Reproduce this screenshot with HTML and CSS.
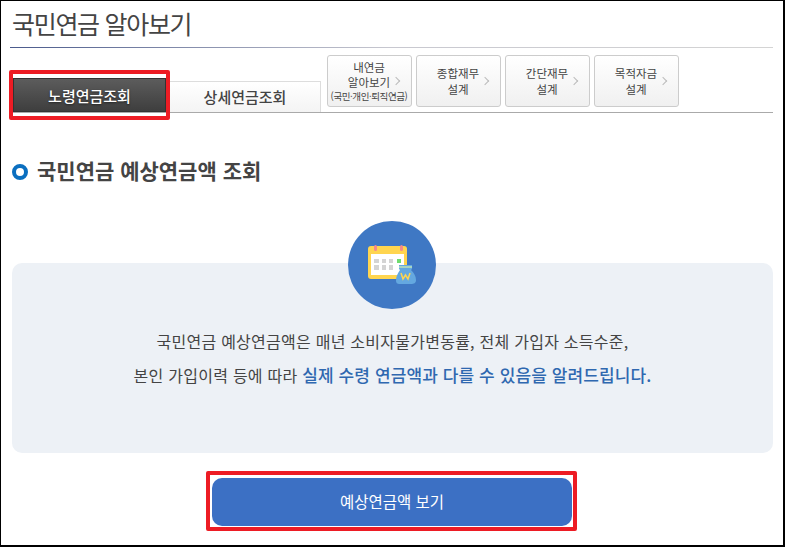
FILE: index.html
```html
<!DOCTYPE html>
<html lang="ko">
<head>
    <meta charset="UTF-8">
    <meta name="viewport" content="width=device-width, initial-scale=1.0">
    <title>국민연금 알아보기</title>
    <link rel="stylesheet" href="styles.css">
</head>
<body>

    <div class="page">
        <h1 class="page-title">국민연금 알아보기</h1>

        <div class="tabs">
            <a class="tab tab-active">노령연금조회</a>
            <a class="tab">상세연금조회</a>
            <div class="links">
                <a class="link link-small">
                    <span class="link-text">내연금<br>알아보기<small>(국민·개인·퇴직연금)</small></span>
                    <span class="chev"></span>
                </a>
                <a class="link"><span class="link-text">종합재무<br>설계</span><span class="chev"></span></a>
                <a class="link"><span class="link-text">간단재무<br>설계</span><span class="chev"></span></a>
                <a class="link"><span class="link-text">목적자금<br>설계</span><span class="chev"></span></a>
            </div>
        </div>

        <h2 class="section-title"><span class="bullet"></span>국민연금 예상연금액 조회</h2>

        <div class="notice">
            <div class="notice-icon">
                <svg width="50" height="42" viewBox="0 0 50 42">
                    <rect x="1" y="2" width="39" height="33" rx="3" fill="#ffd54f"/>
                    <rect x="4" y="10" width="33" height="21" fill="#fff"/>
                    <rect x="7" y="1" width="3" height="6" rx="1.5" fill="#f48a8a"/>
                    <rect x="33" y="1" width="3" height="6" rx="1.5" fill="#f48a8a"/>
                    <g fill="#d4d4d4">
                        <rect x="7" y="15" width="5" height="4"/>
                        <rect x="15" y="15" width="4" height="4"/>
                        <rect x="22" y="15" width="4" height="4"/>
                        <rect x="7" y="21" width="5" height="5"/>
                        <rect x="15" y="21" width="4" height="5"/>
                        <rect x="22" y="21" width="4" height="5"/>
                    </g>
                    <rect x="30" y="15" width="4" height="4" fill="#6fdc6f"/>
                    <path d="M32 21h13v4l-1 1c3 3 5 6 5 10 0 3-2 4-5 4H33c-3 0-4-1-4-4 0-4 2-7 4-10l-1-1z" fill="#64a8e0"/>
                    <rect x="32" y="22" width="13" height="2" fill="#a5d4c4"/>
                    <path d="M34 29l2 6 2.500-4 2.500 4 2-6" fill="none" stroke="#ffd54f" stroke-width="1.500"/>
                </svg>
            </div>
            <p>국민연금 예상연금액은 매년 소비자물가변동률, 전체 가입자 소득수준,</p>
            <p>본인 가입이력 등에 따라 <strong>실제 수령 연금액과 다를 수 있음을 알려드립니다.</strong></p>
        </div>

        <div class="action">
            <button type="button">예상연금액 보기</button>
        </div>

        <span class="mark mark-tab"></span>
        <span class="mark mark-button"></span>
    </div>

</body>
</html>
```

FILE: styles.css
```css
* {
    box-sizing: border-box;
}

html, body {
    margin: 0;
    height: 547px;
    overflow: hidden;
}

body {
    font-family: "Noto Sans CJK KR", "Noto Sans", sans-serif;
    background-color: #fff;
    color: #333;
}

.page {
    position: relative;
    width: 785px;
    height: 547px;
    padding: 0 10px 0 9px;
    background-color: #fff;
    border-style: solid;
    border-color: #000;
    border-width: 1px 2px 2px 1px;
}

.page-title {
    height: 47px;
    margin: 0;
    padding: 3px 0 0 2px;
    font-size: 25px;
    line-height: 38px;
    font-weight: 400;
    letter-spacing: -1.3px;
    color: #444;
    background: linear-gradient(to right, #4a5a8c, #c8c8d0 50%, #d4d4d4) bottom / 100% 1px no-repeat;
}

.tabs {
    display: flex;
    align-items: flex-end;
    height: 65px;
    border-bottom: 1px solid #aaa;
}

.tab {
    display: flex;
    align-items: center;
    justify-content: center;
    width: 155px;
    height: 31px;
    padding: 0 0 2px 3px;
    font-size: 15px;
    font-weight: 500;
    color: #444;
    background: linear-gradient(#fff, #f4f4f4);
    border: 1px solid #ddd;
    border-bottom: none;
}

.tab-active {
    width: 153px;
    height: 34px;
    margin-left: 3px;
    padding: 0;
    color: #fff;
    background: linear-gradient(#5c5c5c, #3e3e3e);
    border: 1px solid #333;
    text-shadow: 0 1px 2px #222;
}

.links {
    display: flex;
    gap: 4px;
    align-self: flex-start;
    margin: 7px 0 0 6px;
}

.link {
    display: flex;
    align-items: center;
    justify-content: center;
    position: relative;
    width: 85px;
    height: 52px;
    padding-right: 1px;
    background: linear-gradient(#fff, #f0f0f0);
    border: 1px solid #ccc;
    border-radius: 3px;
}

.link-text {
    font-size: 11.500px;
    line-height: 16px;
    text-align: center;
    color: #444;
}

.link-small .link-text {
    line-height: 15px;
}

.link-small small {
    display: block;
    font-size: 9.500px;
    line-height: 13px;
    letter-spacing: -0.4px;
    white-space: nowrap;
}

.chev {
    position: absolute;
    right: 12px;
    top: 22px;
    width: 6px;
    height: 6px;
    border-top: 1px solid #bbb;
    border-right: 1px solid #bbb;
    transform: rotate(45deg);
}

.section-title {
    display: flex;
    align-items: center;
    margin: 40px 0 0;
    padding-left: 2px;
    font-size: 21px;
    line-height: 34px;
    font-weight: 700;
    color: #444;
}

.bullet {
    width: 16px;
    height: 16px;
    margin: 4px 9px 0 0;
    border: 4px solid #0b6fc0;
    border-radius: 50%;
}

.notice {
    position: relative;
    height: 190px;
    margin: 76px 0 0 2px;
    padding-top: 61px;
    background-color: #edf1f6;
    border-radius: 10px;
    text-align: center;
}

.notice p {
    margin: 0;
    font-size: 16px;
    line-height: 34px;
    letter-spacing: 0.25px;
    color: #444;
}

.notice strong {
    font-size: 17px;
    font-weight: 500;
    letter-spacing: 0.1px;
    color: #2f68b0;
}

.notice-icon {
    position: absolute;
    top: -42px;
    left: 336px;
    display: flex;
    align-items: center;
    justify-content: center;
    width: 88px;
    height: 88px;
    background-color: #3f78c4;
    border-radius: 50%;
}

.action {
    display: flex;
    justify-content: center;
    margin: 25px 0 0 1px;
}

.action button {
    width: 360px;
    height: 48px;
    padding: 0 0 3px;
    font-family: inherit;
    font-size: 15.500px;
    font-weight: 400;
    color: #fff;
    background-color: #3c70c4;
    border: none;
    border-radius: 10px;
}

.mark {
    position: absolute;
    border: 4px solid #ed1c24;
    border-radius: 2px;
    pointer-events: none;
}

.mark-tab {
    left: 8px;
    top: 69px;
    width: 161px;
    height: 50px;
}

.mark-button {
    left: 205px;
    top: 470px;
    width: 371px;
    height: 60px;
}
```
